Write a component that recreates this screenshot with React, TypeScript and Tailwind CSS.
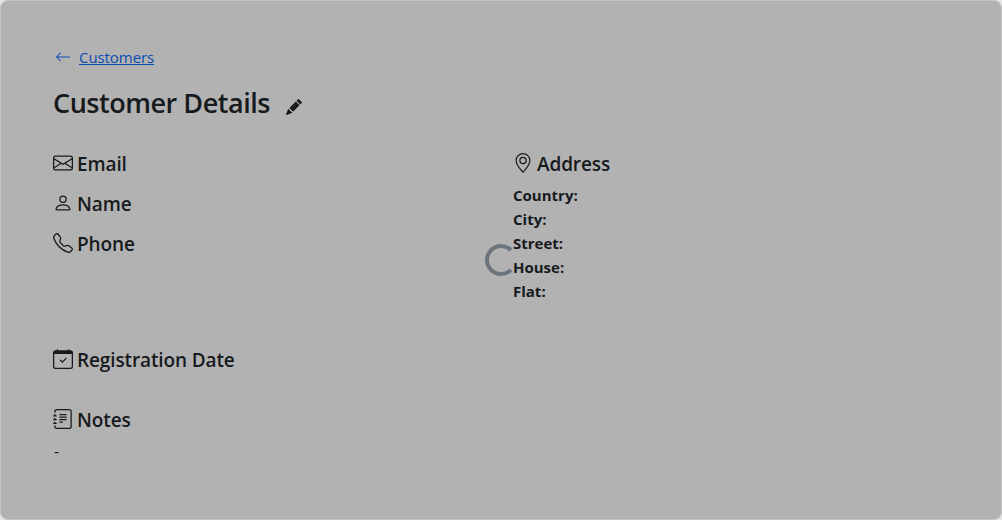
import { ReactNode } from "react";
import {
  BsArrowLeft,
  BsCalendarCheck,
  BsEnvelope,
  BsGeoAlt,
  BsJournalText,
  BsPencilFill,
  BsPerson,
  BsTelephone,
} from "react-icons/bs";

function Heading({ icon, className = "", children }: { icon: ReactNode; className?: string; children: ReactNode }) {
  return (
    <h5 className={`flex h-6 items-center gap-1 text-[19px] font-semibold leading-6 tracking-[-0.12px] ${className}`}>
      <span className="flex h-6 w-5 shrink-0 items-start pt-px text-[20px]">{icon}</span>
      <span className="whitespace-nowrap">{children}</span>
    </h5>
  );
}

const addressFields = ["Country:", "City:", "Street:", "House:", "Flat:"];

export default function App() {
  return (
    <div className="h-[520px] w-[1002px] bg-[#e4e4e4] font-['Open_Sans',sans-serif] text-[#171a1d]">
      <div className="relative h-full rounded-lg border border-[#c4c4c4] bg-[#b2b2b2] px-[52px] pt-11">
        <div className="flex h-6 items-center text-[15px] text-[#094db2]">
          <BsArrowLeft className="ml-0.5 mr-2 size-4" />
          <a href="#" className="tracking-[-0.07px] underline underline-offset-1">Customers</a>
        </div>
        <div className="mt-[17px] flex h-[34px] items-center">
          <h3 className="whitespace-nowrap text-[27px] font-semibold leading-[34px] tracking-[-0.47px]">Customer Details</h3>
          <BsPencilFill className="ml-4 mt-2 size-4" />
        </div>
        <div className="mt-8 grid h-[196px] grid-cols-[460px_1fr]">
          <div className="flex flex-col gap-4">
            <Heading icon={<BsEnvelope />}>Email</Heading>
            <Heading icon={<BsPerson />}>Name</Heading>
            <Heading icon={<BsTelephone />}>Phone</Heading>
          </div>
          <div>
            <Heading icon={<BsGeoAlt />}>Address</Heading>
            <ul className="mt-[7px] text-[15px] font-bold leading-6">
              {addressFields.map((field) => (
                <li key={field}>{field}</li>
              ))}
            </ul>
          </div>
        </div>
        <Heading icon={<BsCalendarCheck />}>Registration Date</Heading>
        <Heading className="mt-9" icon={<BsJournalText />}>Notes</Heading>
        <p className="mt-[7px] pl-px text-[16px] leading-6">-</p>
        <div className="absolute left-[484px] top-[243px] size-8 rounded-full border-4 border-[#6c757d] border-r-transparent" />
      </div>
    </div>
  );
}
